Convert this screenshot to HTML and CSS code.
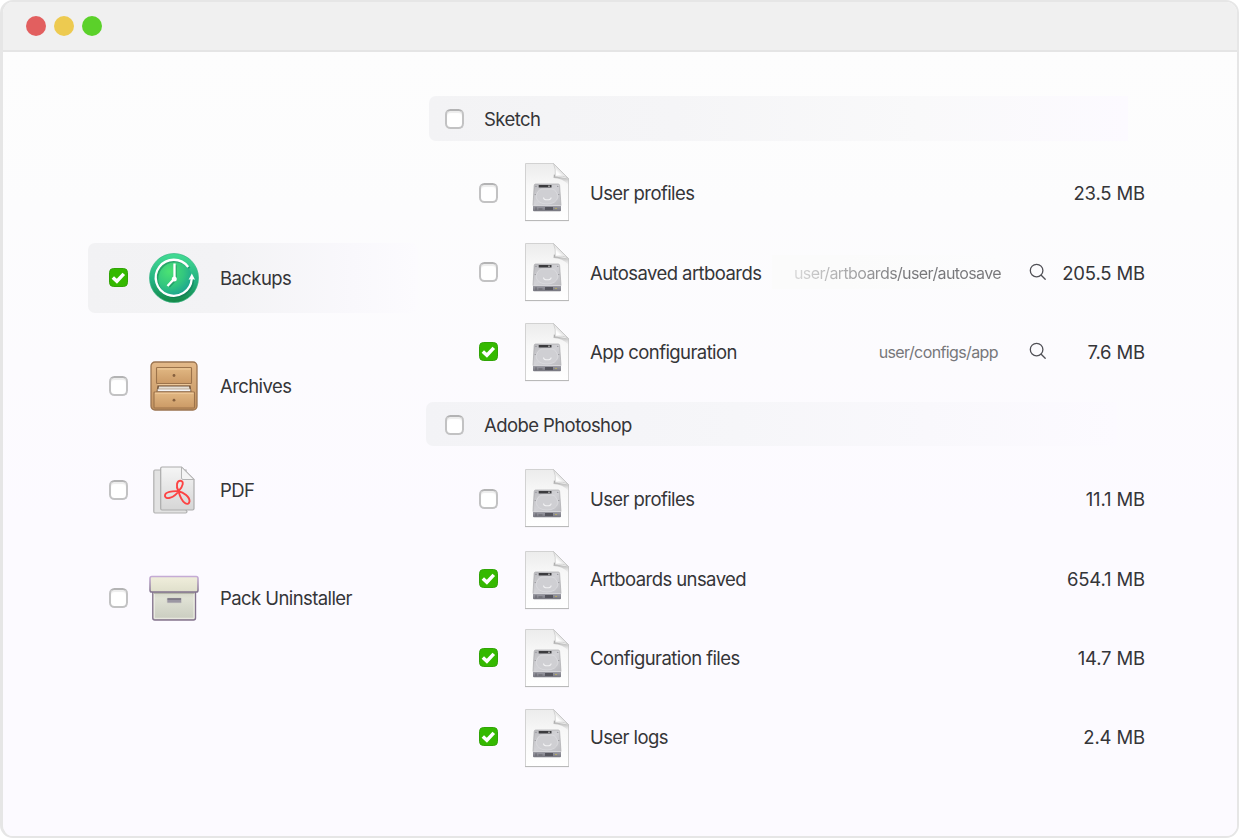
FILE: index.html
```html
<!DOCTYPE html>
<html lang="en">
<head>
<meta charset="utf-8">
<title>Cleaner</title>
<link rel="stylesheet" href="styles.css">
</head>
<body>
<svg class="defs" width="0" height="0" aria-hidden="true">
  <defs>
    <linearGradient id="paper" x1="0" y1="0" x2="0" y2="1"><stop offset="0" stop-color="#ececec"/><stop offset=".4" stop-color="#f8f8f8"/><stop offset="1" stop-color="#fff"/></linearGradient>
    <linearGradient id="fold" x1="0" y1="1" x2=".9" y2=".1"><stop offset="0" stop-color="#f4f4f4"/><stop offset=".35" stop-color="#fff"/><stop offset=".6" stop-color="#d8d8d8"/></linearGradient>
    <linearGradient id="foldshade" x1="0" y1="0" x2="0" y2="1"><stop offset="0" stop-color="#777" stop-opacity=".8"/><stop offset="1" stop-color="#bbb" stop-opacity="0"/></linearGradient>
    <linearGradient id="metal" x1="0" y1="0" x2="1" y2="1"><stop offset="0" stop-color="#b9b9bd"/><stop offset=".5" stop-color="#d2d2d6"/><stop offset="1" stop-color="#bcbcc1"/></linearGradient>
    <linearGradient id="front" x1="0" y1="0" x2="0" y2="1"><stop offset="0" stop-color="#a0a0a8"/><stop offset="1" stop-color="#75757e"/></linearGradient>
    <linearGradient id="ring" x1="0" y1="0" x2="0" y2="1"><stop offset="0" stop-color="#43dc93"/><stop offset=".55" stop-color="#25b282"/><stop offset="1" stop-color="#148746"/></linearGradient>
    <radialGradient id="dial" cx=".38" cy=".32" r=".75"><stop offset="0" stop-color="#4be273"/><stop offset=".55" stop-color="#32c67f"/><stop offset="1" stop-color="#199e94"/></radialGradient>
    <linearGradient id="wood" x1="0" y1="0" x2="0" y2="1"><stop offset="0" stop-color="#e3b989"/><stop offset="1" stop-color="#c3935f"/></linearGradient>
    <linearGradient id="drawer" x1="0" y1="0" x2="0" y2="1"><stop offset="0" stop-color="#e2b883"/><stop offset="1" stop-color="#cb9a66"/></linearGradient>
    <linearGradient id="page" x1="0" y1="0" x2="0" y2="1"><stop offset="0" stop-color="#f5f5f5"/><stop offset="1" stop-color="#d6d6d6"/></linearGradient>
    <linearGradient id="lid" x1="0" y1="0" x2="0" y2="1"><stop offset="0" stop-color="#f0eedc"/><stop offset="1" stop-color="#dfdfcb"/></linearGradient>
    <linearGradient id="box" x1="0" y1="0" x2="0" y2="1"><stop offset="0" stop-color="#d2d4c6"/><stop offset=".25" stop-color="#e0e2d5"/><stop offset="1" stop-color="#c9ccbf"/></linearGradient>
    <linearGradient id="boxline" x1="0" y1="0" x2="0" y2="1"><stop offset="0" stop-color="#c5abd5"/><stop offset="1" stop-color="#82738d"/></linearGradient>
  </defs>
  <symbol id="disk-file" viewBox="0 0 46 60">
    <path d="M1.500 2.500H29L45 17v42H1.500z" fill="#777" opacity=".2"/>
    <path d="M1.500 1.500H29.500L44.500 16.500V58.500H1.500z" fill="url(#paper)" stroke="#d2d2d2"/>
    <path d="M1 58.600H45" stroke="#b2b2b2" stroke-width=".9"/>
    <path d="M30 12l1.500 2.500 13 2v6.500q-6-7-15-7z" fill="url(#foldshade)"/>
    <path d="M29.500 1.500Q32 7 31.300 14.500Q39 13 44.500 16.500z" fill="url(#fold)" stroke="#c0c0c0" stroke-width=".6"/>
    <path d="M11.500 22H34.200Q35.500 22 35.600 23.500L37 43.500H9L10.200 23.500Q10.300 22 11.500 22z" fill="url(#metal)" stroke="#aaaaae" stroke-width=".7"/>
    <path d="M12 35Q13 28 18 27H28Q33 28 34 35Q32 42 23 42T12 35z" fill="#cfcfd3" stroke="#dcdcdf" stroke-width=".8"/>
    <path d="M19.500 35.500q0 2.300 3.800 2.300t3.800-2.300" fill="none" stroke="#f2f2f4" stroke-width="1.100"/>
    <path d="M14.700 23H27.500V25.500H14.700z" fill="#3b3b3e"/><path d="M24 24.200h2" stroke="#c1c1c1"/>
    <circle cx="12" cy="24.300" r=".6" fill="#828288"/><circle cx="33.800" cy="24.300" r=".6" fill="#828288"/><circle cx="11.200" cy="32.500" r=".6" fill="#8b8b90"/><circle cx="34.800" cy="32.500" r=".6" fill="#8b8b90"/>
    <path d="M9 43.500H37V48.300q0 1-1 1H10q-1 0-1-1z" fill="url(#front)"/>
    <path d="M9.200 43.500H36.800" stroke="#e1e1e3" stroke-width=".8"/>
    <path d="M21 45h8v3h-8z" fill="#55555d"/><path d="M12 45.200v3M14.500 47h4" stroke="#5a5a61" stroke-width=".8"/><path d="M31 46.500h2" stroke="#b5aa62"/>
  </symbol>
  <symbol id="clock" viewBox="0 0 50 50">
    <circle cx="25" cy="25" r="24.500" fill="url(#ring)" stroke="#36b484" stroke-width=".7"/>
    <circle cx="24.500" cy="25" r="18" fill="url(#dial)"/>
    <g fill="none" stroke="#0d6550" stroke-width="2.200" opacity=".4" transform="translate(1.200 1.200)">
      <path d="M39.400 14A18 18 0 1 0 43 26"/><path d="M25.500 11V25.500L19 32.500"/>
    </g>
    <g fill="none" stroke="#fff" stroke-width="2.300">
      <path d="M39.200 14A18 18 0 1 0 42.700 26"/><path d="M25.500 10.500V25.500L18.500 33"/>
    </g>
    <circle cx="25.300" cy="26" r="2.500" fill="#fff"/><path d="M42.800 20.500l3.200 6.200q-3.200-1.300-6.400 0z" fill="#fff"/>
  </symbol>
  <symbol id="cabinet" viewBox="0 0 48 50">
    <rect x="1" y="1" width="46" height="48" rx="4" fill="url(#wood)" stroke="#9b7450" stroke-width="1.300"/>
    <rect x="6.500" y="6.500" width="35" height="16" rx=".8" fill="url(#drawer)" stroke="#9c734b" stroke-width="1.100"/>
    <path d="M7.500 8H40.500" stroke="#f0cc9d" stroke-width="1"/>
    <path d="M7.500 23.500H40.500" stroke="#ecc799" stroke-width="1"/>
    <path d="M7.500 24.500H40.500L41.500 31H6.500z" fill="#73553c"/>
    <path d="M9 25.500H39L39.500 28H8.500z" fill="#e5dfd5"/><path d="M7.500 28H40.500V30.500H7.500z" fill="#f3f3f3" stroke="#9a856d" stroke-width=".6"/>
    <rect x="4" y="31" width="40.500" height="16" rx=".8" fill="url(#drawer)" stroke="#9c734b" stroke-width="1.100"/>
    <path d="M5 32.200H43.500" stroke="#f0cc9d" stroke-width="1"/>
    <circle cx="24" cy="14.500" r="1.400" fill="#86603e"/><circle cx="24" cy="39.200" r="1.400" fill="#86603e"/>
  </symbol>
  <symbol id="pdf" viewBox="0 0 42 48">
    <path d="M2 4H33V44L34 45.500Q34 47 32.500 47H2Q.8 47 .8 45.500V5.500Q.8 4 2 4z" fill="#e2e2e2" stroke="#b0b0b0" stroke-width="1.200"/>
    <path d="M9 1H28.500L41 13.500V42.500Q41 44 39.500 44H9Q7.700 44 7.700 42.500V2.500Q7.700 1 9 1z" fill="url(#page)" stroke="#acacac" stroke-width="1.200"/>
    <path d="M28.500 1V12Q28.500 13.500 30 13.500H41z" fill="#f4f4f4" stroke="#b4b4b4"/>
    <path d="M25.500 25.200C22.500 20 24 14.800 27.300 14.800C31.500 14.800 30 21 25.500 25.200C21 32 13 34 12 30.300C11.200 25.500 20 25 25.500 25.200C30.500 26.200 37 31 36.500 35.500C35.500 40.500 29 38 25.500 25.200z" fill="none" stroke="#fc4444" stroke-width="1.900" stroke-linejoin="round"/>
  </symbol>
  <symbol id="archive-box" viewBox="0 0 50 46">
    <path d="M3.800 16H46.500V43Q46.500 45 44.500 45H5.800Q3.800 45 3.800 43z" fill="url(#box)" stroke="#85748f" stroke-width="1.400"/>
    <path d="M5.300 17.800V43.300H45V17.800" fill="none" stroke="#eeeee5"/>
    <path d="M5 18H45.500" stroke="#a9aa9e" stroke-width="1.500"/>
    <rect x="1" y="1.500" width="48" height="15.500" rx="1.800" fill="url(#lid)" stroke="url(#boxline)" stroke-width="1.500"/>
    <rect x="18" y="23" width="14.500" height="5" rx=".8" fill="#9b97a3" stroke="#d1d1ca" stroke-width=".7"/><path d="M18.500 24H32" stroke="#77727f" stroke-width="1.500"/>
  </symbol>
  <symbol id="search" viewBox="0 0 18 18"><g fill="none" stroke="#505056" stroke-width="1.300" stroke-linecap="round"><circle cx="7.600" cy="7.600" r="6.300"/><path d="M12.200 12.200L16.200 16.200"/></g></symbol>
  <symbol id="tick" viewBox="0 0 18 18"><path d="M3 8.900L7.300 12.900L14.600 5.200" fill="none" stroke="#fff" stroke-width="3.700"/></symbol>
</svg>

<div class="window">
  <header class="titlebar">
    <span class="light close"></span><span class="light minimize"></span><span class="light expand"></span>
  </header>
  <main class="content">
    <nav class="sidebar">
      <div class="category active"><span class="check on"><svg><use href="#tick"/></svg></span><span class="thumb"><svg width="50" height="50"><use href="#clock"/></svg></span><span>Backups</span></div>
      <div class="category archives"><span class="check"></span><span class="thumb"><svg width="48" height="50"><use href="#cabinet"/></svg></span><span>Archives</span></div>
      <div class="category documents"><span class="check"></span><span class="thumb"><svg width="42" height="48"><use href="#pdf"/></svg></span><span class="abbr">PDF</span></div>
      <div class="category packs"><span class="check"></span><span class="thumb"><svg width="50" height="46"><use href="#archive-box"/></svg></span><span>Pack Uninstaller</span></div>
    </nav>
    <div class="files">
      <section class="group">
        <h2 class="group-title"><span class="check"></span><span class="app">Sketch</span></h2>
        <div class="file"><span class="check"></span><svg class="doc"><use href="#disk-file"/></svg><span class="name">User profiles</span><span class="size">23.5 MB</span></div>
        <div class="file"><span class="check"></span><svg class="doc"><use href="#disk-file"/></svg><span class="name">Autosaved artboards</span><span class="path faded"><span>user/artboards/user/autosave</span></span><svg class="search"><use href="#search"/></svg><span class="size">205.5 MB</span></div>
        <div class="file"><span class="check on"><svg><use href="#tick"/></svg></span><svg class="doc"><use href="#disk-file"/></svg><span class="name">App configuration</span><span class="path">user/configs/app</span><svg class="search"><use href="#search"/></svg><span class="size">7.6 MB</span></div>
      </section>
      <section class="group second">
        <h2 class="group-title"><span class="check"></span><span class="app">Adobe Photoshop</span></h2>
        <div class="file"><span class="check"></span><svg class="doc"><use href="#disk-file"/></svg><span class="name">User profiles</span><span class="size">11.1 MB</span></div>
        <div class="file low"><span class="check on"><svg><use href="#tick"/></svg></span><svg class="doc"><use href="#disk-file"/></svg><span class="name">Artboards unsaved</span><span class="size">654.1 MB</span></div>
        <div class="file logs"><span class="check on"><svg><use href="#tick"/></svg></span><svg class="doc"><use href="#disk-file"/></svg><span class="name">Configuration files</span><span class="size">14.7 MB</span></div>
        <div class="file"><span class="check on"><svg><use href="#tick"/></svg></span><svg class="doc"><use href="#disk-file"/></svg><span class="name">User logs</span><span class="size">2.4 MB</span></div>
      </section>
    </div>
  </main>
</div>
</body>
</html>
```
FILE: styles.css
```css
* { box-sizing: border-box; }
body { margin: 0; background: #fff; color: #353538; font: 400 18.5px/24px Inter, sans-serif; letter-spacing: -.58px; white-space: nowrap; overflow: hidden; }
svg { display: block; flex: none; }
.defs { height: 0; }
.window { display: flex; flex-direction: column; width: 1239px; height: 838px; border: 2px solid #e6e6e6; border-left-width: 3px; border-radius: 13px; overflow: hidden; background: #fdfdfd; }
.titlebar { display: flex; gap: 8px; height: 50px; padding: 14px 0 0 23px; background: #f0f0f0; border-bottom: 2px solid #e5e5e5; flex: none; }
.light { width: 20px; height: 20px; border-radius: 50%; }
.close { background: #e25f5f; }
.minimize { background: #edca50; }
.expand { background: #5bd12a; }
.content { display: flex; flex: 1; background: linear-gradient(#fdfdfd 0%, #fcfcfd 20%, #fcfaff 60%, #fcfaff 100%); }
.sidebar { width: 330px; margin-left: 85px; padding-top: 191px; flex: none; }
.category { display: flex; align-items: center; height: 70px; padding-left: 20px; margin-bottom: 38px; border-radius: 7px; }
.category.archives { margin-bottom: 34px; }
.category.active { background: linear-gradient(90deg, #f2f2f4 0%, #f3f3f5 40%, #f9f8fc 80%, #fcfbfe 100%); }
.thumb { display: flex; justify-content: center; width: 50px; margin: 0 21px; padding-bottom: 1px; }
.check { width: 19px; height: 20px; margin: 0 0 0 1px; flex: none; border: 2px solid #c2c2c3; border-top-color: #b3b3b4; border-radius: 5.500px; background: #fff; box-shadow: inset 0 2px 1px #ededed; }
.check.on { height: 19px; margin-bottom: 1px; border: 1px solid #31a407; border-radius: 4.500px; background: #35b900; box-shadow: none; }
.check.on svg { width: 17px; height: 17px; }
.files { width: 719px; margin-left: 8px; padding-top: 44px; }
.group.second { margin-top: 10px; }
.group-title { display: flex; align-items: center; width: 699px; height: 45px; margin: 0 0 12px 3px; padding-left: 15px; gap: 20px; border-radius: 7px 0 0 7px; background: linear-gradient(90deg, #f3f3f5 0%, #f5f5f7 35%, #f9f9fa 70%, #fcfaff 100%); font: inherit; }
.second .group-title { width: 691px; height: 44px; margin: 0 0 14px; padding: 2px 0 0 18px; background: linear-gradient(90deg, #f3f3f6 0%, #f6f6f9 45%, #fcfaff 100%); }
.file { display: flex; align-items: center; height: 79.500px; padding-left: 52px; }
.second .file { height: 79.400px; }
.name { padding-top: 1px; }
.second .name, .second .size { padding-top: 0; }
.second .low .name, .second .low .size { padding-top: 1px; }
.doc { width: 46px; height: 60px; margin: 0 20px 1px 26px; }
.group:first-child .file:last-child .doc { margin-bottom: -1px; }
.second .doc { margin-bottom: 3px; }
.second .low .doc { margin-bottom: -3px; }
.second .logs .doc { margin-bottom: -1px; }
.second .file:last-child .doc { margin-bottom: -2px; }
.path { margin-left: auto; color: #77777a; font-size: 16px; letter-spacing: -.61px; margin-right: 31px; }
.path.faded { display: flex; align-items: center; height: 34px; margin-right: 28px; padding: 1px 0 0 22px; background: linear-gradient(90deg, #fbfbfb 30%, #fcfcfd); }
.path.faded span { color: transparent; background: linear-gradient(90deg, #d8d8d8, #77777a 110px); background-clip: text; -webkit-background-clip: text; }
.search { width: 18px; height: 18px; margin-bottom: 1px; }
.size { margin-left: auto; padding-top: 1px; text-align: right; letter-spacing: -.15px; }
.path ~ .size { width: 98px; margin-left: 0; }
```
